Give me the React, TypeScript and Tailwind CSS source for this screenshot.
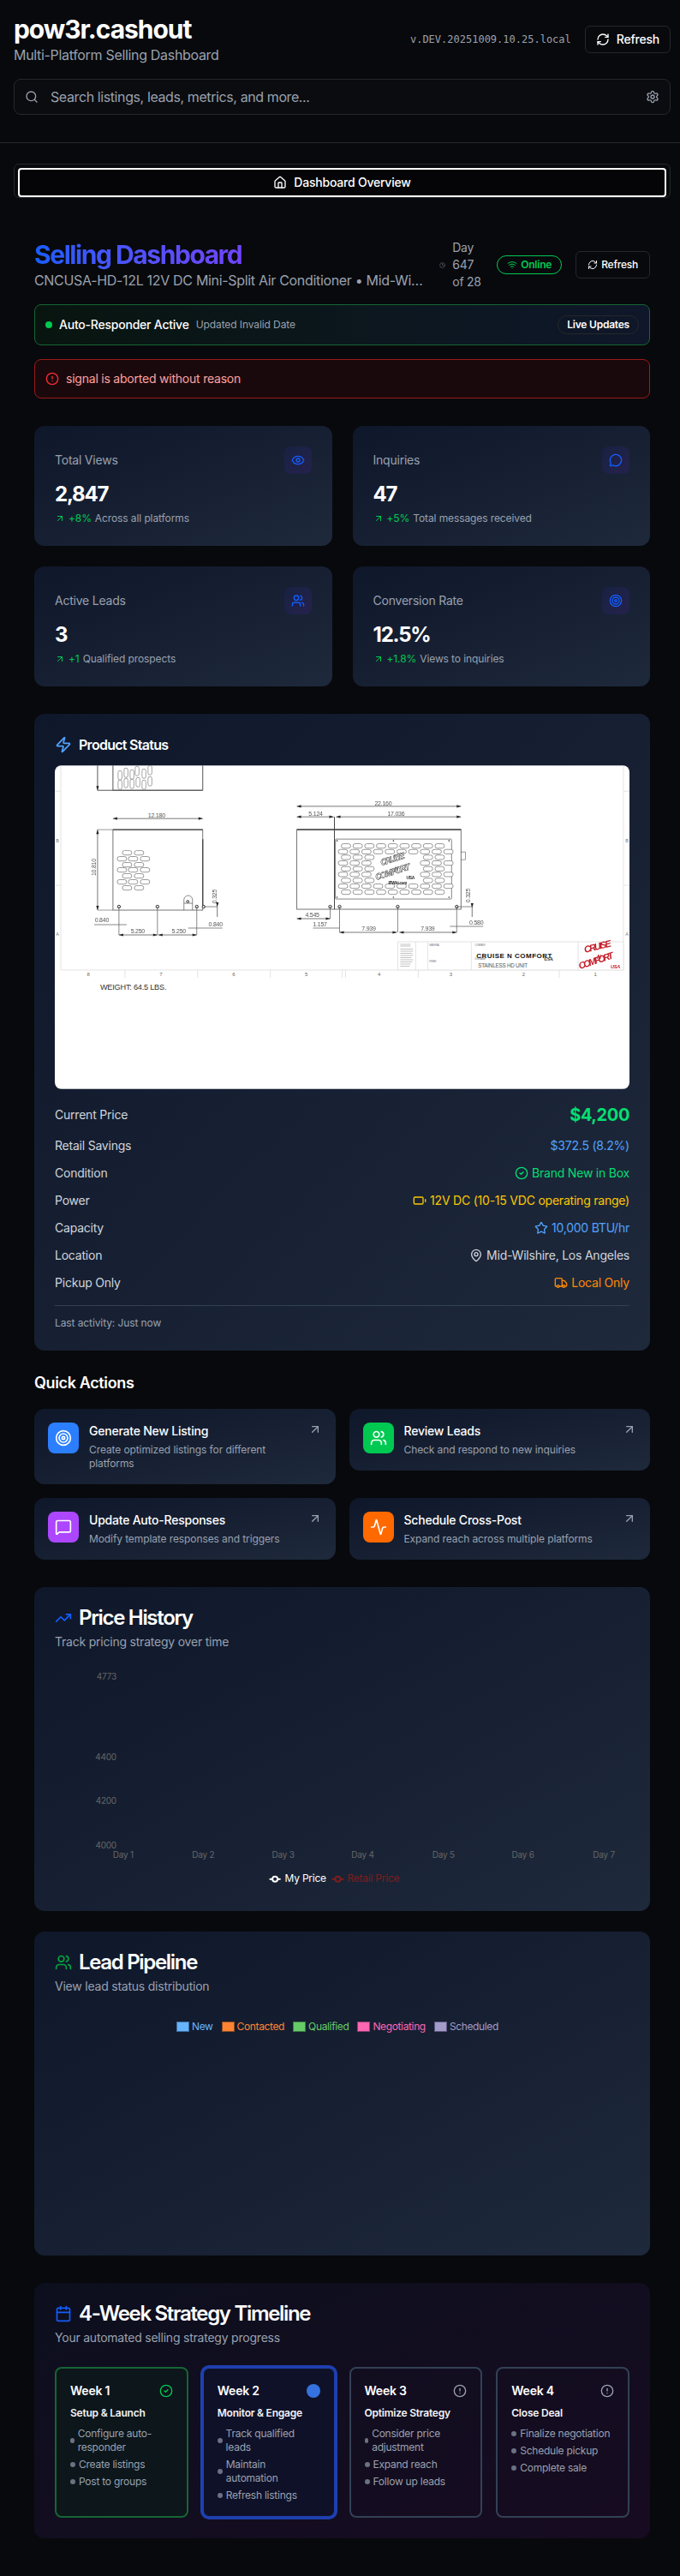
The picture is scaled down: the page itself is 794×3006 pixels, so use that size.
import React from "react";
import {
  Activity, ArrowUpRight, Battery, Calendar, CheckCircle2, CircleAlert, Clock, Eye, Home, MapPin,
  MessageCircle, MessageSquare, RefreshCw, Search, Settings, Star, Target, TrendingUp, Truck, Users, Wifi, Zap,
} from "lucide-react";

const line = "#555";

function Arrow({ x, y, dir }: { x: number; y: number; dir: "l" | "r" | "u" | "d" }) {
  const p = {
    l: `${x},${y} ${x + 5},${y - 1.6} ${x + 5},${y + 1.6}`,
    r: `${x},${y} ${x - 5},${y - 1.6} ${x - 5},${y + 1.6}`,
    u: `${x},${y} ${x - 1.6},${y + 5} ${x + 1.6},${y + 5}`,
    d: `${x},${y} ${x - 1.6},${y - 5} ${x + 1.6},${y - 5}`,
  }[dir];
  return <polygon points={p} fill="#222" />;
}

function HDim({ x1, x2, y }: { x1: number; x2: number; y: number }) {
  return (
    <g>
      <line x1={x1} x2={x2} y1={y} y2={y} stroke={line} strokeWidth="0.8" />
      <Arrow x={x1} y={y} dir="l" />
      <Arrow x={x2} y={y} dir="r" />
    </g>
  );
}

function Dim({ x, y, t, rotate }: { x: number; y: number; t: string; rotate?: boolean }) {
  return (
    <text
      x={x}
      y={y}
      fontSize="7"
      fill="#555"
      textAnchor="middle"
      dominantBaseline="middle"
      fontFamily="Liberation Sans, sans-serif"
      transform={rotate ? `rotate(-90 ${x} ${y})` : undefined}
    >
      {t}
    </text>
  );
}

function Slot({ x, y, w = 11 }: { x: number; y: number; w?: number }) {
  return <rect x={x} y={y - 2.6} width={w} height={5.2} rx={2.6} fill="#fff" stroke="#555" strokeWidth="0.6" />;
}

function Foot({ x }: { x: number }) {
  return <circle cx={x} cy={165} r={1.7} fill="#fff" stroke="#333" strokeWidth="1" />;
}

function Drawing() {
  const rows = [94, 100.7, 107.3, 114, 120.7, 127.3, 134.3, 141, 148];
  const leftA = [79, 93];
  const leftB = [73, 86, 100];
  const leftRows = [102, 109, 116, 122, 129, 136, 143];
  return (
    <svg viewBox="0 0 672 378" className="block w-full h-full blur-[0.3px]">
      <rect width="672" height="378" fill="#fff" />
      <path d="M7 0V239H665V0" fill="none" stroke="#ddd" strokeWidth="0.8" />
      <path d="M0 30H7M0 140H7M665 30H672M665 140H672M82 239V248M167 239V248M252 239V248M336 239V248M340 239V248M425 239V248M590 239V248" stroke="#ddd" strokeWidth="0.8" />
      {[[39, "8"], [124, "7"], [209, "6"], [294, "5"], [379, "4"], [463, "3"], [548, "2"], [632, "1"]].map(([x, t]) => (
        <text key={t as string} x={x as number} y={245} fontSize="6" fill="#666" textAnchor="middle" dominantBaseline="middle" fontFamily="Liberation Sans, sans-serif">{t}</text>
      ))}
      {[[3, 88, "B"], [3, 198, "A"], [669, 88, "B"], [669, 198, "A"]].map(([x, y, t], i) => (
        <text key={i} x={x as number} y={y as number} fontSize="5.5" fill="#777" textAnchor="middle" dominantBaseline="middle" fontFamily="Liberation Sans, sans-serif">{t}</text>
      ))}
      <text x={53} y={260} fontSize="9.2" fill="#333" dominantBaseline="middle" fontFamily="Liberation Sans, sans-serif">WEIGHT: 64.5 LBS.</text>

      {/* upper view */}
      <path d="M68 0V29H173V0M50 29H173M50 0V29" fill="none" stroke="#555" strokeWidth="1" />
      <Arrow x={50} y={29} dir="d" />
      {[[74, 6], [81, 3], [88, 5], [94, 1], [102, 4], [109, 0], [74, 17], [81, 15], [88, 16], [95, 14], [102, 17], [109, 13]].map(([x, y], i) => (
        <rect key={i} x={x} y={y} width={4.5} height={11} rx={2.2} fill="#fff" stroke="#666" strokeWidth="0.6" />
      ))}

      {/* left elevation */}
      <rect x={68} y={75} width={105} height={94} fill="none" stroke="#666" strokeWidth="0.9" />
      <line x1={68} x2={173} y1={75} y2={75} stroke="#555" strokeWidth="1.5" />
      <line x1={173} x2={173} y1={86} y2={165} stroke="#444" strokeWidth="1.3" />
      <HDim x1={68} x2={173} y={62} />
      <Dim x={119} y={59} t="12.180" />
      <line x1={50} x2={50} y1={75} y2={169} stroke={line} strokeWidth="0.8" />
      <Arrow x={50} y={75} dir="u" />
      <Arrow x={50} y={169} dir="d" />
      <line x1={50} x2={68} y1={75} y2={75} stroke={line} strokeWidth="0.6" />
      <line x1={50} x2={68} y1={169} y2={169} stroke={line} strokeWidth="0.6" />
      <Dim x={46} y={119} t="10.810" rotate />
      {leftRows.map((y, r) =>
        (r % 2 === 0 ? leftA : leftB).map((x) => <Slot key={`${r}-${x}`} x={x} y={y} />),
      )}
      <path d="M151 169V157a5 5 0 0 1 10 0V169M151 161H161" fill="none" stroke="#555" strokeWidth="0.7" />
      <circle cx={155.5} cy={159} r={1.4} fill="#fff" stroke="#333" />
      <Foot x={75} /><Foot x={120} /><Foot x={166} /><Foot x={174} />
      <path d="M75 165V198M120 165V198M166 165V198M174 165H190" stroke={line} strokeWidth="0.7" />
      <HDim x1={75} x2={120} y={198} />
      <HDim x1={121} x2={166} y={198} />
      <Dim x={97} y={194} t="5.250" />
      <Dim x={145} y={194} t="5.250" />
      <Dim x={55} y={181} t="0.840" />
      <path d="M46 186H84M156 190H196" stroke={line} strokeWidth="0.7" />
      <Dim x={188} y={186} t="0.840" />
      <Dim x={187} y={153} t="0.325" rotate />
      <path d="M190 160V177" stroke={line} strokeWidth="0.8" />
      <Arrow x={190} y={165} dir="d" />

      {/* right elevation */}
      <rect x={283} y={75} width={192} height={93} fill="none" stroke="#666" strokeWidth="0.9" />
      <line x1={283} x2={475} y1={75} y2={75} stroke="#555" strokeWidth="1.7" />
      <line x1={327} x2={327} y1={60} y2={168} stroke="#444" strokeWidth="1" />
      <HDim x1={283} x2={475} y={47.7} />
      <HDim x1={283} x2={326} y={60} />
      <HDim x1={329} x2={475} y={60} />
      <Dim x={384} y={44.5} t="22.160" />
      <Dim x={305} y={57} t="5.124" />
      <Dim x={399} y={57} t="17.036" />
      <rect x={328} y={86} width={136} height={70} rx={1} fill="#fff" stroke="#666" strokeWidth="0.8" />
      {[[330, 88], [396, 88], [461, 88], [330, 154], [396, 154], [461, 154]].map(([x, y], i) => (
        <circle key={i} cx={x} cy={y} r={0.8} fill="#333" />
      ))}
      {rows.map((y, r) => {
        const n = r % 2 === 0 ? 9 : 10;
        const start = r % 2 === 0 ? 335 : 331.5;
        return Array.from({ length: n }).map((_, i) => {
          const x = start + i * 13.7;
          if (r >= 2 && r <= 6 && x > 369 && x < 418) return null;
          return <Slot key={`${r}-${i}`} x={x} y={y} />;
        });
      })}
      <g fontFamily="Liberation Sans, sans-serif" fontWeight="700" fontStyle="italic" fill="#fff" stroke="#222" strokeWidth="0.45">
        <text x={382} y={117} fontSize="10" textLength="29" transform="rotate(-18 382 117)">CRUISE</text>
        <text x={397} y={123} fontSize="6">N</text>
        <text x={376} y={134} fontSize="10" textLength="42" transform="rotate(-18 376 134)">COMFORT</text>
      </g>
      <g fontFamily="Liberation Sans, sans-serif" fontWeight="700" fill="#222">
        <text x={411} y={133} fontSize="5">USA</text>
        <text x={390} y={139} fontSize="4.5">IPWiki.com</text>
      </g>
      <rect x={475} y={101} width={5} height={9} fill="#fff" stroke="#555" strokeWidth="0.6" />
      <Foot x={322} /><Foot x={333} /><Foot x={401} /><Foot x={470} />
      <path d="M322 165V179M333 165V195M401 165V195M470 165V195M470 165H488" stroke={line} strokeWidth="0.7" />
      <HDim x1={283} x2={322} y={179} />
      <Dim x={301} y={175} t="4.545" />
      <path d="M302 190H333M462 188H501" stroke={line} strokeWidth="0.7" />
      <Dim x={310} y={186} t="1.157" />
      <HDim x1={333} x2={400} y={195} />
      <HDim x1={403} x2={470} y={195} />
      <Dim x={367} y={191} t="7.939" />
      <Dim x={436} y={191} t="7.939" />
      <Dim x={493} y={184} t="0.580" />
      <Dim x={484} y={152} t="0.325" rotate />
      <path d="M488 161V177" stroke={line} strokeWidth="0.8" />
      <Arrow x={488} y={166} dir="d" />

      {/* title block */}
      <rect x={401} y={206} width={264} height={33} fill="#fff" stroke="#ddd" strokeWidth="0.8" />
      <path d="M422 206V239M436 206V239M487 206V239M612 206V239" stroke="#ddd" strokeWidth="0.8" />
      <path d="M404 209H416M404 211H416M404 214.5H419M404 217H419M404 219.5H418M404 222H419M404 224.5H417M404 227H419M404 229.5H418M404 232H416M404 234.5H415" stroke="#999" strokeWidth="0.6" />
      <g fontFamily="Liberation Sans, sans-serif" fill="#777" fontSize="2.8">
        <text x={438} y={211}>MATERIAL</text>
        <text x={438} y={230}>FINISH</text>
        <text x={491} y={211}>COMPANY:</text>
        <text x={491} y={227}>JOB NAME:</text>
      </g>
      <text x={493} y={225} fontSize="8" fontWeight="700" fill="#111" textLength="88" fontFamily="Liberation Sans, sans-serif">CRUISE N COMFORT</text>
      <text x={572} y={228} fontSize="5.5" fontWeight="700" fill="#222" fontFamily="Liberation Serif, serif">USA</text>
      <text x={495} y={236.5} fontSize="6.3" fill="#555" fontFamily="Liberation Sans, sans-serif">STAINLESS HD UNIT</text>
      <g fontFamily="Liberation Sans, sans-serif" fontWeight="700" fontStyle="italic" fill="#c4202b">
        <text x={620} y={219} fontSize="11" textLength="32" transform="rotate(-14 620 219)">CRUISE</text>
        <text x={634} y={226} fontSize="7">N</text>
        <text x={614} y={238} fontSize="11" textLength="42" transform="rotate(-18 614 238)">COMFORT</text>
        <text x={650} y={237} fontSize="5.5">USA</text>
      </g>
    </svg>
  );
}

const stats = [
  { t: "Total Views", v: "2,847", d: "+8%", n: "Across all platforms", I: Eye },
  { t: "Inquiries", v: "47", d: "+5%", n: "Total messages received", I: MessageCircle },
  { t: "Active Leads", v: "3", d: "+1", n: "Qualified prospects", I: Users },
  { t: "Conversion Rate", v: "12.5%", d: "+1.8%", n: "Views to inquiries", I: Target },
];

const actions = [
  { t: "Generate New Listing", d: "Create optimized listings for different platforms", c: "bg-blue-500", I: Target },
  { t: "Review Leads", d: "Check and respond to new inquiries", c: "bg-green-500", I: Users },
  { t: "Update Auto-Responses", d: "Modify template responses and triggers", c: "bg-purple-500", I: MessageSquare },
  { t: "Schedule Cross-Post", d: "Expand reach across multiple platforms", c: "bg-orange-500", I: Activity },
];

const details = [
  { l: "Retail Savings", v: "$372.5 (8.2%)", c: "text-blue-400" },
  { l: "Condition", v: "Brand New in Box", c: "text-green-400", I: CheckCircle2 },
  { l: "Power", v: "12V DC (10-15 VDC operating range)", c: "text-yellow-400", I: Battery },
  { l: "Capacity", v: "10,000 BTU/hr", c: "text-blue-400", I: Star },
  { l: "Location", v: "Mid-Wilshire, Los Angeles", c: "text-gray-300", I: MapPin },
  { l: "Pickup Only", v: "Local Only", c: "text-orange-400", I: Truck },
];

const legend = [
  { t: "New", c: "text-[#66b3ff]", b: "bg-[#66b3ff] border-[#3f6f9f]" },
  { t: "Contacted", c: "text-[#ff8533]", b: "bg-[#ff8533] border-[#8f4f25]" },
  { t: "Qualified", c: "text-[#66cc66]", b: "bg-[#66cc66] border-[#3f7f45]" },
  { t: "Negotiating", c: "text-[#ff66b3]", b: "bg-[#ff66b3] border-[#8f3f70]" },
  { t: "Scheduled", c: "text-[#a39bc9]", b: "bg-[#a39bc9] border-[#5f5a80]" },
];

const weeks = [
  { w: "Week 1", t: "Setup & Launch", items: ["Configure auto-responder", "Create listings", "Post to groups"], box: "border-[#166534] bg-[#0c161b]", s: "done" },
  { w: "Week 2", t: "Monitor & Engage", items: ["Track qualified leads", "Maintain automation", "Refresh listings"], box: "border-[#1e40af] bg-[#0f1129] ring-2 ring-[#1e40af]", s: "now" },
  { w: "Week 3", t: "Optimize Strategy", items: ["Consider price adjustment", "Expand reach", "Follow up leads"], box: "border-[#334155]", s: "todo" },
  { w: "Week 4", t: "Close Deal", items: ["Finalize negotiation", "Schedule pickup", "Complete sale"], box: "border-[#334155]", s: "todo" },
];

function CardHead({ I, c, t, s }: { I: typeof Eye; c: string; t: string; s: string }) {
  return (
    <div>
      <div className="flex items-center gap-2">
        <I size={20} className={c} />
        <h3 className="text-2xl leading-none font-semibold tracking-[-0.055em] text-white">{t}</h3>
      </div>
      <p className="mt-1.5 text-sm text-gray-400">{s}</p>
    </div>
  );
}

const card = "rounded-xl bg-gradient-to-br from-[#0f172a] to-[#1e293b]";

export default function App() {
  return (
    <div className="min-h-[3006px] bg-[#08090c] font-['Inter',sans-serif] tracking-[-0.22px] text-white">
      <header className="border-b border-[#26272b] pb-8 pt-4 pl-4 pr-[11px]">
        <div className="flex items-center justify-between">
          <div>
            <h1 className="text-3xl font-bold tracking-[-0.035em]">pow3r.cashout</h1>
            <p className="text-base tracking-[-0.02em] text-gray-400">Multi-Platform Selling Dashboard</p>
          </div>
          <div className="flex items-center gap-4">
            <span className="font-['DejaVu_Sans_Mono',monospace] text-xs tracking-normal text-gray-400">v.DEV.20251009.10.25.local</span>
            <button className="flex h-8 items-center gap-2 rounded-md border border-[#26272b] px-3 text-sm font-medium">
              <RefreshCw size={16} />
              Refresh
            </button>
          </div>
        </div>
        <div className="mt-4 flex h-[42px] items-center rounded-lg border border-[#26272b] bg-[#0b0c0f] pl-3 pr-3">
          <Search size={16} className="text-gray-400" />
          <input
            readOnly
            placeholder="Search listings, leads, metrics, and more..."
            className="ml-3.5 min-w-0 flex-1 bg-transparent text-base tracking-[-0.025em] outline-none placeholder:text-gray-400"
          />
          <Settings size={16} className="text-gray-400" />
        </div>
      </header>

      <div className="pl-4 pr-[11px] pt-6">
        <div className="h-10 rounded-md border border-[#26272b] px-1 pt-1">
          <button className="flex h-[34px] w-full items-center justify-center gap-2 rounded border-2 border-white bg-[#050507] text-sm font-medium">
            <Home size={16} />
            Dashboard Overview
          </button>
        </div>

        <main className="px-6 pt-12">
          <div className="flex items-center gap-4">
            <div className="min-w-0 flex-1">
              <h2 className="bg-gradient-to-r from-blue-600 to-purple-600 bg-clip-text text-3xl font-bold tracking-[-0.048em] text-transparent">Selling Dashboard</h2>
              <p className="truncate text-base tracking-[-0.02em] text-gray-400">CNCUSA-HD-12L 12V DC Mini-Split Air Conditioner • Mid-Wilshire, Los Angeles</p>
            </div>
            <div className="flex items-center gap-2 text-sm text-gray-400">
              <Clock size={7} className="text-gray-500" />
              <span className="w-[36px]">Day 647 of 28</span>
            </div>
            <span className="flex h-[22px] items-center gap-1 rounded-full border border-green-500 px-[11px] text-xs font-semibold text-green-500">
              <Wifi size={12} />
              Online
            </span>
            <button className="flex h-8 items-center gap-1 rounded-md border border-[#26272b] px-[13px] text-xs font-medium">
              <RefreshCw size={12} />
              Refresh
            </button>
          </div>

          <div className="mt-4 flex h-12 items-center justify-between rounded-lg border border-[#166534] bg-gradient-to-r from-[#08150f] to-[#0f172a] px-3">
            <div className="flex items-center gap-2">
              <span className="h-2 w-2 rounded-full bg-green-500" />
              <span className="text-sm font-medium">Auto-Responder Active</span>
              <span className="text-xs tracking-[-0.1px] text-gray-400">Updated Invalid Date</span>
            </div>
            <span className="flex h-[22px] items-center rounded-full border border-[#27272a] px-[10px] text-xs font-semibold">Live Updates</span>
          </div>

          <div className="mt-4 flex items-center gap-2 rounded-lg border border-[#991b1b] bg-[#1a090c] px-3 py-3">
            <CircleAlert size={16} className="text-red-500" />
            <span className="text-sm text-red-300">signal is aborted without reason</span>
          </div>

          <div className="mt-8 grid grid-cols-2 gap-6">
            {stats.map(({ t, v, d, n, I }) => (
              <div key={t} className={`${card} p-6`}>
                <div className="flex items-center justify-between">
                  <span className="text-sm text-gray-400">{t}</span>
                  <span className="flex h-8 w-8 items-center justify-center rounded-lg bg-gradient-to-br from-[#172241] to-[#25214d]">
                    <I size={16} className="text-blue-600" />
                  </span>
                </div>
                <div className="mt-2 text-2xl font-bold tracking-[-0.05em]">{v}</div>
                <div className="mt-1 flex items-center gap-1 text-xs tracking-[-0.1px]">
                  <ArrowUpRight size={12} className="text-green-500" />
                  <span className="text-green-500">{d}</span>
                  <span className="text-gray-400">{n}</span>
                </div>
              </div>
            ))}
          </div>

          <section className={`${card} mt-8 p-6`}>
            <div className="flex h-6 items-center gap-2">
              <Zap size={20} className="text-blue-400" />
              <h3 className="text-base font-semibold tracking-[-0.045em]">Product Status</h3>
            </div>
            <div className="mt-3 h-[378px] overflow-hidden rounded-lg">
              <Drawing />
            </div>
            <div className="mt-4 flex h-7 items-center justify-between">
              <span className="text-sm text-gray-300">Current Price</span>
              <span className="text-xl font-bold tracking-[-0.02em] text-green-400">$4,200</span>
            </div>
            <div className="mt-3 flex flex-col gap-3">
              {details.map(({ l, v, c, I }) => (
                <div key={l} className="flex h-5 items-center justify-between text-sm">
                  <span className="text-gray-300">{l}</span>
                  <span className={`flex items-center gap-1 ${c}`}>
                    {I && <I size={16} />}
                    {v}
                  </span>
                </div>
              ))}
            </div>
            <div className="mt-4 border-t border-[#334155] pt-3 text-xs tracking-[-0.1px] text-gray-400">Last activity: Just now</div>
          </section>

          <h3 className="mt-6 text-lg font-semibold tracking-[-0.02em]">Quick Actions</h3>
          <div className="mt-4 grid grid-cols-2 items-start gap-4">
            {actions.map(({ t, d, c, I }) => (
              <div key={t} className={`${card} flex items-start gap-3 p-4`}>
                <span className={`flex h-9 w-9 shrink-0 items-center justify-center rounded-lg ${c}`}>
                  <I size={20} className="text-white" />
                </span>
                <div className="min-w-0 flex-1">
                  <div className="text-sm font-medium">{t}</div>
                  <p className="mt-1 text-xs tracking-[-0.1px] text-gray-400">{d}</p>
                </div>
                <ArrowUpRight size={16} className="shrink-0 text-gray-400" />
              </div>
            ))}
          </div>

          <section className={`${card} mt-8 h-[378px] p-6`}>
            <CardHead I={TrendingUp} c="text-blue-600" t="Price History" s="Track pricing strategy over time" />
            <svg viewBox="0 0 672 268" className="mt-3 block h-[268px] w-full" fontFamily="Inter, sans-serif">
              {[[19, "4773"], [113, "4400"], [164, "4200"], [216, "4000"]].map(([y, t]) => (
                <text key={t as string} x={72} y={y as number} fontSize="10" fill="#666" textAnchor="end" dominantBaseline="middle">{t}</text>
              ))}
              {[80, 173.5, 267, 360, 454.5, 547.5, 642].map((x, i) => (
                <text key={x} x={x} y={227} fontSize="10" fill="#666" textAnchor="middle" dominantBaseline="middle">{`Day ${i + 1}`}</text>
              ))}
              <line x1={251} x2={264} y1={255} y2={255} stroke="#fff" strokeWidth="2" />
              <circle cx={257.5} cy={255} r={3} fill="#1a2335" stroke="#fff" strokeWidth="2" />
              <text x={269} y={255} fontSize="12" fill="#fff" dominantBaseline="middle">My Price</text>
              <line x1={324} x2={338} y1={255} y2={255} stroke="#7f1d1d" strokeWidth="2" />
              <circle cx={331} cy={255} r={3} fill="#1a2335" stroke="#7f1d1d" strokeWidth="2" />
              <text x={342} y={255} fontSize="12" fill="#7f1d1d" dominantBaseline="middle">Retail Price</text>
            </svg>
          </section>

          <section className={`${card} mt-6 h-[378px] p-6`}>
            <CardHead I={Users} c="text-green-600" t="Lead Pipeline" s="View lead status distribution" />
            <div className="mt-[29px] flex justify-center gap-[10px] pr-[11px]">
              {legend.map(({ t, c, b }) => (
                <span key={t} className={`flex items-center gap-[3px] text-xs tracking-[-0.03em] ${c}`}>
                  <i className={`block h-3 w-[15px] border ${b}`} />
                  {t}
                </span>
              ))}
            </div>
          </section>

          <section className="mt-8 rounded-xl bg-gradient-to-br from-[#0c0f1e] to-[#170b21] p-6">
            <CardHead I={Calendar} c="text-blue-600" t="4-Week Strategy Timeline" s="Your automated selling strategy progress" />
            <div className="mt-6 grid h-[176px] grid-cols-4 gap-4">
              {weeks.map(({ w, t, items, box, s }) => (
                <div key={w} className={`rounded-lg border-2 p-4 ${box}`}>
                  <div className="flex h-5 items-center justify-between">
                    <span className="text-sm font-semibold">{w}</span>
                    {s === "done" && <CheckCircle2 size={16} className="text-green-500" />}
                    {s === "now" && <span className="h-4 w-4 rounded-full bg-[#3572e0]" />}
                    {s === "todo" && <CircleAlert size={16} className="text-gray-400" />}
                  </div>
                  <div className="mt-2 text-xs font-semibold text-gray-100">{t}</div>
                  <ul className="mt-2 flex flex-col gap-1 text-xs tracking-[-0.02em] text-gray-400">
                    {items.map((it) => (
                      <li key={it} className="flex items-center gap-1">
                        <span className="h-1.5 w-1.5 rounded-full bg-gray-500" />
                        <span>{it}</span>
                      </li>
                    ))}
                  </ul>
                </div>
              ))}
            </div>
          </section>
        </main>
      </div>
    </div>
  );
}
